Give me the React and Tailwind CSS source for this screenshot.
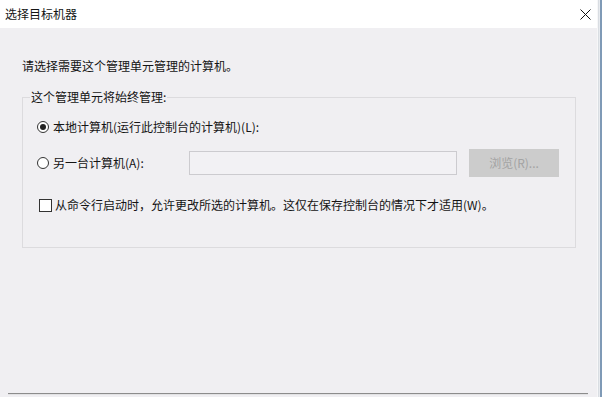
import React from "react";

export default function App() {
  const font = { fontFamily: '"Noto Sans CJK SC", "Noto Sans", sans-serif' };
  return (
    <div
      className="w-[602px] h-[397px] flex flex-row bg-[#f0eff2] text-[#141414] text-[12px] leading-[16px] overflow-hidden"
      style={font}
    >
      <div className="w-[597px] h-full flex flex-col">
        {/* Title bar */}
        <div className="h-[28px] bg-white flex items-center justify-between pl-[5px] pr-[5px]">
          <span>选择目标机器</span>
          <svg width="11" height="11" viewBox="0 0 11 11" className="mr-[1px]">
            <path d="M0.5 0.5 L10.5 10.5 M10.5 0.5 L0.5 10.5" stroke="#111" strokeWidth="1" fill="none" />
          </svg>
        </div>

        {/* Body */}
        <div className="flex-1 flex flex-col pt-[30px] pl-[22px]">
          <div>请选择需要这个管理单元管理的计算机。</div>

          <fieldset className="mt-[15px] w-[554px] border border-[#dcdbde] px-[7px] pt-0 pb-[34px] m-0">
            <legend className="px-[1px] leading-[16px]">这个管理单元将始终管理:</legend>

            {/* Radio 1 */}
            <div className="mt-[14px] flex items-center h-[16px] pl-[7px]">
              <span className="w-[12px] h-[12px] rounded-full border border-[#333] flex items-center justify-center bg-white">
                <span className="w-[6px] h-[6px] rounded-full bg-[#222]" />
              </span>
              <span className="ml-[4px]">本地计算机(运行此控制台的计算机)(L):</span>
            </div>

            {/* Radio 2 */}
            <div className="mt-[14px] flex items-center h-[28px] pl-[7px]">
              <span className="w-[12px] h-[12px] rounded-full border border-[#333] bg-white" />
              <span className="ml-[4px] w-[136px]">另一台计算机(A):</span>
              <div className="w-[268px] h-[24px] border border-[#cccbcf] bg-[#f2f1f4]" />
              <div className="ml-[12px] w-[90px] h-[28px] bg-[#cccccc] flex items-center justify-center text-[#a3a3a3]">
                浏览(R)...
              </div>
            </div>

            {/* Checkbox */}
            <div className="mt-[20px] flex items-center h-[16px] pl-[9px]">
              <span className="w-[13px] h-[13px] border border-[#333] bg-white" />
              <span className="ml-[3px]">从命令行启动时，允许更改所选的计算机。这仅在保存控制台的情况下才适用(W)。</span>
            </div>
          </fieldset>
        </div>

        {/* Bottom separator */}
        <div className="ml-[8px] mr-[9px] h-[1px] bg-[#8c8c8c]" />
        <div className="ml-[8px] mr-[9px] mb-[2px] h-[1px] bg-[#e2e2e4]" />
      </div>

      {/* Right window edge */}
      <div className="w-[5px] h-full flex flex-row">
        <div className="w-[1px] h-full bg-[#f7f7f8]" />
        <div className="w-[1px] h-full bg-[#d9dde2]" />
        <div className="w-[1px] h-full bg-[#e8ebef]" />
        <div className="w-[2px] h-full bg-[#7f9ab6]" />
      </div>
    </div>
  );
}
